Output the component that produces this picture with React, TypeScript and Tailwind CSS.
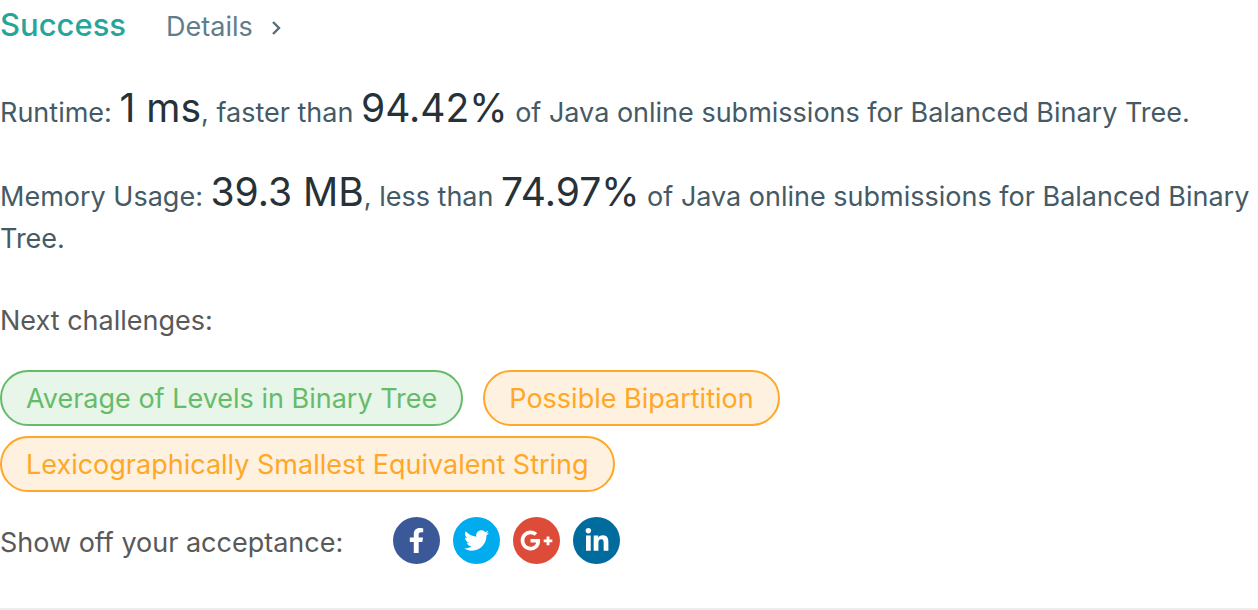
import React from "react";
import { FaFacebookF, FaTwitter, FaLinkedinIn } from "react-icons/fa";
import { FaGooglePlusG } from "react-icons/fa6";

const challenges = [
  { title: "Average of Levels in Binary Tree", style: "border-[#66bb6a] bg-[#e8f5e9] text-[#66bb6a]" },
  { title: "Possible Bipartition", style: "border-[#ffa726] bg-[#fff1df] text-[#ffa726]" },
  { title: "Lexicographically Smallest Equivalent String", style: "border-[#ffa726] bg-[#fff1df] text-[#ffa726]" },
];

const shares = [
  { name: "Facebook", style: "bg-[#3b5998]", icon: <FaFacebookF size={25} /> },
  { name: "Twitter", style: "bg-[#00aced]", icon: <FaTwitter size={25} /> },
  { name: "Google Plus", style: "bg-[#dd4b39]", icon: <FaGooglePlusG size={33} /> },
  { name: "LinkedIn", style: "bg-[#006b9d]", icon: <FaLinkedinIn size={26} /> },
];

function Figure({ children }: { children: React.ReactNode }) {
  return <span className="text-[39px] leading-8 text-[#263238]">{children}</span>;
}

export default function App() {
  return (
    <main className="border-b-2 border-[#eeeeee] bg-white pb-11 font-['Inter',sans-serif] text-[27px] leading-[42px] text-[#455a64]">
      <header className="flex items-baseline gap-10 pt-1">
        <h1 className="text-[31px] font-medium text-[#26a69a]">Success</h1>
        <a href="#details" className="flex items-center gap-4 text-[#607d8b]">
          Details
          <svg viewBox="0 0 14 14" className="mt-0.5 h-3.5 w-3.5" fill="none" stroke="#546e7a" strokeWidth="2.4">
            <path d="M4 1l6 6-6 6" />
          </svg>
        </a>
      </header>
      <p className="mt-11">
        Runtime: <Figure>1 ms</Figure>, faster than <Figure>94.42%</Figure> of Java online submissions for Balanced Binary Tree.
      </p>
      <p className="mt-[42px]">
        Memory Usage: <Figure>39.3 MB</Figure>, less than <Figure>74.97%</Figure> of Java online submissions for Balanced Binary Tree.
      </p>
      <h2 className="mt-10 text-[#595959]">Next challenges:</h2>
      <nav className="mt-7 flex flex-wrap gap-x-5 gap-y-2.5">
        {challenges.map((c) => (
          <a key={c.title} href="#challenge" className={`flex h-14 items-center rounded-full border-2 px-6 pt-0.5 ${c.style}`}>
            {c.title}
          </a>
        ))}
      </nav>
      <div className="mt-[25px] flex items-center gap-[50px] text-[#595959]">
        <span className="pt-1">Show off your acceptance:</span>
        <div className="flex gap-[13px]">
          {shares.map((s) => (
            <button key={s.name} type="button" aria-label={s.name} className={`flex h-[47px] w-[47px] items-center justify-center rounded-full text-white ${s.style}`}>
              {s.icon}
            </button>
          ))}
        </div>
      </div>
    </main>
  );
}
